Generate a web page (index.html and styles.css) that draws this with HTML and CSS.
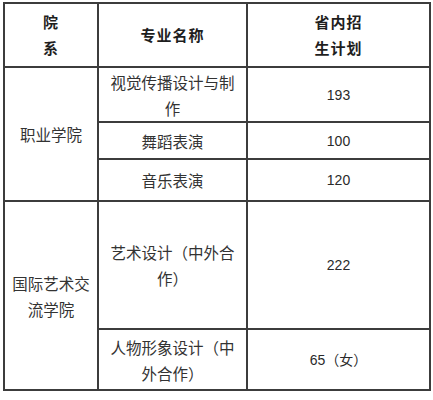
FILE: index.html
```html
<!DOCTYPE html>
<html lang="zh">
<head>
<meta charset="utf-8">
<link rel="stylesheet" href="styles.css">
</head>
<body>
<table class="plan">
  <colgroup>
    <col class="c1">
    <col class="c2">
    <col class="c3">
  </colgroup>
  <thead>
    <tr class="r-head">
      <th>院<br>系</th>
      <th>专业名称</th>
      <th>省内招<br>生计划</th>
    </tr>
  </thead>
  <tbody>
    <tr class="r1">
      <td class="dept" rowspan="3">职业学院</td>
      <td class="major">视觉传播设计与制作</td>
      <td class="num">193</td>
    </tr>
    <tr class="r2">
      <td class="major">舞蹈表演</td>
      <td class="num">100</td>
    </tr>
    <tr class="r3">
      <td class="major">音乐表演</td>
      <td class="num">120</td>
    </tr>
    <tr class="r4">
      <td class="dept" rowspan="2">国际艺术交流学院</td>
      <td class="major">艺术设计（中外合作）</td>
      <td class="num">222</td>
    </tr>
    <tr class="r5">
      <td class="major">人物形象设计（中外合作）</td>
      <td class="num">65（女）</td>
    </tr>
  </tbody>
</table>
</body>
</html>
```
FILE: styles.css
```css
html, body {
  margin: 0;
  padding: 0;
  background: #ffffff;
}

body {
  padding: 2px 0 0 3px;
}

.plan {
  border-collapse: collapse;
  table-layout: fixed;
  width: 426px;
  font-family: "Noto Sans CJK SC", "Noto Sans", sans-serif;
  font-size: 15.5px;
  line-height: 26px;
  color: #333333;
}

.c1 { width: 94px; }
.c2 { width: 149px; }
.c3 { width: 183px; }

.plan th,
.plan td {
  border: 2px solid #3c3c3c;
  text-align: center;
  vertical-align: middle;
  padding: 0;
}

.plan th {
  font-weight: 700;
  color: #1e1e1e;
  font-size: 15px;
  letter-spacing: 1px;
}

.plan td.dept {
  padding: 0 6px;
}

.plan td.major {
  padding: 0 9px;
}

.plan td.num {
  font-family: "Liberation Sans", "Noto Sans CJK SC", sans-serif;
  font-size: 14px;
  color: #2a2a2a;
}

.r-head { height: 64px; }
.r1 { height: 55px; }
.r2 { height: 37px; }
.r3 { height: 42px; }
.r4 { height: 128px; }
.r5 { height: 61px; }
```
